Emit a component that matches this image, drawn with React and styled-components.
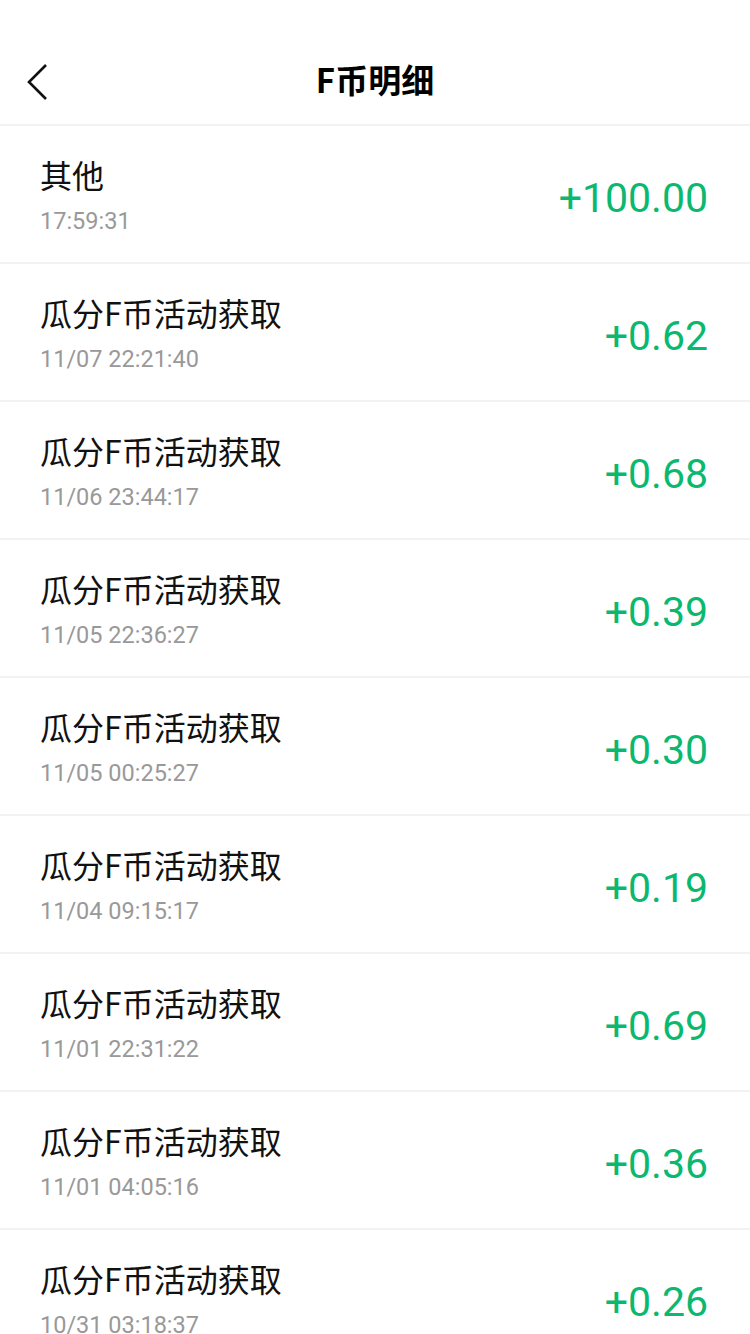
import React from "react";
import styled, { createGlobalStyle } from "styled-components";

const GlobalStyle = createGlobalStyle`
	body {
		margin: 0;
		background: #fff;
		font-family: "Noto Sans CJK SC", "Noto Sans", sans-serif;
	}
`;

const records = [
	{ title: "其他", time: "17:59:31", amount: "+100.00" },
	{ title: "瓜分F币活动获取", time: "11/07 22:21:40", amount: "+0.62" },
	{ title: "瓜分F币活动获取", time: "11/06 23:44:17", amount: "+0.68" },
	{ title: "瓜分F币活动获取", time: "11/05 22:36:27", amount: "+0.39" },
	{ title: "瓜分F币活动获取", time: "11/05 00:25:27", amount: "+0.30" },
	{ title: "瓜分F币活动获取", time: "11/04 09:15:17", amount: "+0.19" },
	{ title: "瓜分F币活动获取", time: "11/01 22:31:22", amount: "+0.69" },
	{ title: "瓜分F币活动获取", time: "11/01 04:05:16", amount: "+0.36" },
	{ title: "瓜分F币活动获取", time: "10/31 03:18:37", amount: "+0.26" },
];

const App = () => {
	return (
		<Page>
			<GlobalStyle />
			<NavBar>
				<BackButton>
					<svg width="24" height="40" viewBox="0 0 24 40">
						<polyline points="20,3 3,20 20,37" fill="none" stroke="#111" strokeWidth="2.6" />
					</svg>
				</BackButton>
				<Title>F币明细</Title>
			</NavBar>
			<List>
				{records.map((r, idx) => (
					<Row key={idx}>
						<Info>
							<RowTitle>{r.title}</RowTitle>
							<Time>{r.time}</Time>
						</Info>
						<Amount>{r.amount}</Amount>
					</Row>
				))}
			</List>
		</Page>
	);
};

const Page = styled.div`
	width: 750px;
	height: 1334px;
	overflow: hidden;
`;

const NavBar = styled.div`
	position: relative;
	height: 84px;
	margin-top: 40px;
	display: flex;
	align-items: center;
	justify-content: center;
	border-bottom: 2px solid #f2f2f2;
`;

const BackButton = styled.div`
	position: absolute;
	left: 26px;
	top: 22px;
	display: flex;
`;

const Title = styled.div`
	font-size: 33px;
	font-weight: 700;
	color: #000;
	margin-top: -6px;
`;

const List = styled.div`
	display: flex;
	flex-direction: column;
`;

const Row = styled.div`
	height: 136px;
	display: flex;
	align-items: center;
	justify-content: space-between;
	padding: 0 42px 0 40px;
	border-bottom: 2px solid #f2f2f2;
`;

const Info = styled.div`
	display: flex;
	flex-direction: column;
	gap: 10px;
	margin-top: 0;
`;

const RowTitle = styled.div`
	font-size: 32px;
	line-height: 44px;
	color: #111;
`;

const Time = styled.div`
	font-family: Roboto, "Liberation Sans", sans-serif;
	font-size: 23.5px;
	line-height: 30px;
	color: #999;
`;

const Amount = styled.div`
	font-family: Roboto, "Liberation Sans", sans-serif;
	font-size: 41px;
	line-height: 48px;
	color: #0ab86f;
	margin-top: 8px;
`;

export default App;
